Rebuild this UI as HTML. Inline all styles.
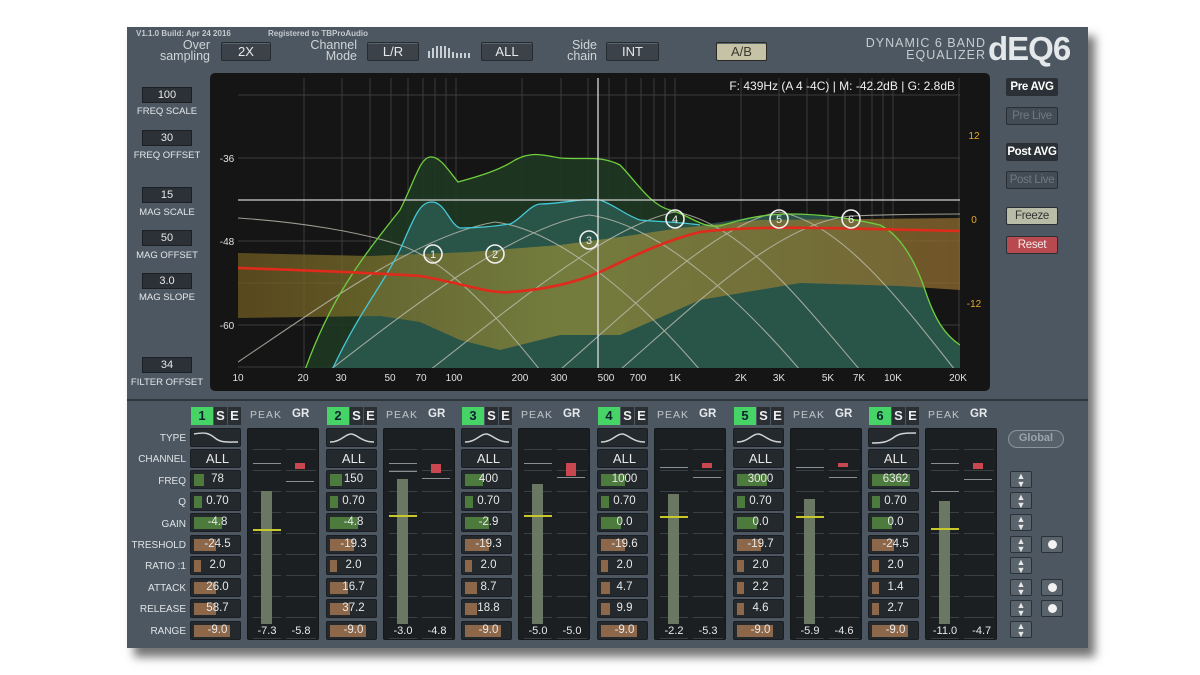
<!DOCTYPE html>
<html><head><meta charset="utf-8"><style>
*{margin:0;padding:0;box-sizing:border-box}
body{width:1200px;height:675px;background:#fff;font-family:"Liberation Sans",sans-serif;position:relative;overflow:hidden}
#p{position:absolute;left:127px;top:27px;width:961px;height:621px;background:#4c5761;box-shadow:7px 9px 9px rgba(0,0,0,.55)}
.a{position:absolute}
.btn{position:absolute;background:#3b4249;border:1px solid #262b30;border-radius:2px;color:#e6e8ea;font-size:13px;text-align:center;box-shadow:inset 0 1px 0 #59636c}
.lbl{position:absolute;color:#cfd4d8;font-size:12.5px;line-height:11px;text-align:right}
.lb{position:absolute;color:#e4e7ea;font-size:9.5px;text-align:center;width:80px;white-space:nowrap}
.lv{position:absolute;width:50px;height:16px;background:#2b3136;border:1px solid #1c2024;color:#e8e8e8;font-size:11px;text-align:center;line-height:14px}
.rb{position:absolute;left:1006px;width:52px;height:18px;border:1px solid #2a2f33;border-radius:2px;font-size:11.5px;text-align:center;line-height:16px;font-weight:bold;white-space:nowrap;letter-spacing:-.3px;overflow:hidden}
.band{position:absolute;top:0;width:135px;height:675px}
.n{position:absolute;top:407px;height:18px;font-size:13px;font-weight:bold;text-align:center;line-height:18px}
.v{position:absolute;left:0;width:51px;height:19px;background:#24292d;border:1px solid #1a1d21;border-radius:2px;color:#e8e8e8;font-size:11.5px;line-height:17px}
.v i{position:absolute;left:3px;top:3px;height:12px;display:block}
.v span{position:relative;display:block;text-align:center;padding-left:4px}
.g{background:#4d7b3e}.b{background:#8c674a}
.m{position:absolute;left:57px;top:428px;width:72px;height:212px;background:#1c1f22;border:1px solid #15181a;border-radius:2px;overflow:hidden}
.m .c{position:absolute;top:0;height:212px;background:repeating-linear-gradient(to bottom,transparent 0 20px,#3a3f44 20px 21px)}
.ud{position:absolute;left:1010px;width:22px;height:17px;background:#5a646d;border:1px solid #2a3035;border-radius:2px;color:#e8e8e8;font-size:9px;text-align:center;line-height:8px}
.dot{position:absolute;left:1041px;width:22px;height:17px;background:#5a646d;border:1px solid #2a3035;border-radius:2px}
.dot:after{content:"";position:absolute;left:6px;top:3px;width:9px;height:9px;border-radius:50%;background:#f2f2f2}
</style></head><body>
<div id="p"></div>
<div class="a" style="left:127px;top:399px;width:961px;height:2px;background:#2e353b"></div>
<!-- header -->
<div class="a" style="left:136px;top:29px;font-size:8px;font-weight:bold;color:#c4c9cd">V1.1.0 Build: Apr 24 2016</div>
<div class="a" style="left:268px;top:29px;font-size:8px;font-weight:bold;color:#c4c9cd">Registered to TBProAudio</div>
<div class="lbl" style="left:140px;top:40px;width:70px">Over<br>sampling</div>
<div class="btn" style="left:221px;top:42px;width:50px;height:19px;line-height:17px">2X</div>
<div class="lbl" style="left:287px;top:40px;width:70px">Channel<br>Mode</div>
<div class="btn" style="left:367px;top:42px;width:52px;height:19px;line-height:17px">L/R</div>
<svg class="a" style="left:427px;top:43px" width="48" height="16"><g fill="#c9ced2"><rect x="1" y="8" width="2" height="7"/><rect x="5" y="5" width="2" height="10"/><rect x="9" y="3" width="2" height="12"/><rect x="13" y="3" width="2" height="12"/><rect x="17" y="3" width="2" height="12"/><rect x="21" y="5" width="2" height="10"/><rect x="25" y="9" width="2" height="6"/><rect x="29" y="10" width="2" height="5"/><rect x="33" y="10" width="2" height="5"/><rect x="37" y="10" width="2" height="5"/><rect x="41" y="10" width="2" height="5"/></g></svg>
<div class="btn" style="left:481px;top:42px;width:52px;height:19px;line-height:17px">ALL</div>
<div class="lbl" style="left:537px;top:40px;width:60px">Side<br>chain</div>
<div class="btn" style="left:606px;top:42px;width:53px;height:19px;line-height:17px">INT</div>
<div class="btn" style="left:716px;top:42px;width:51px;height:19px;line-height:17px;background:#c6c2a6;color:#3a3a30;border-color:#2a2a25">A/B</div>
<div class="a" style="left:840px;top:37px;width:146px;text-align:right;color:#c7ccd0;font-size:12.5px;line-height:12px;letter-spacing:1px">DYNAMIC 6 BAND<br>EQUALIZER</div>
<div class="a" style="left:988px;top:30px;color:#e5e8eb;font-size:33px;font-weight:bold;letter-spacing:-1px">dEQ6</div>
<!-- left controls -->
<div class="lv" style="left:142px;top:87px">100</div><div class="lb" style="left:127px;top:106px">FREQ SCALE</div>
<div class="lv" style="left:142px;top:130px">30</div><div class="lb" style="left:127px;top:150px">FREQ OFFSET</div>
<div class="lv" style="left:142px;top:187px">15</div><div class="lb" style="left:127px;top:207px">MAG SCALE</div>
<div class="lv" style="left:142px;top:230px">50</div><div class="lb" style="left:127px;top:250px">MAG OFFSET</div>
<div class="lv" style="left:142px;top:273px">3.0</div><div class="lb" style="left:127px;top:292px">MAG SLOPE</div>
<div class="lv" style="left:142px;top:357px">34</div><div class="lb" style="left:127px;top:377px">FILTER OFFSET</div>
<!-- right buttons -->
<div class="rb" style="top:78px;background:#2a3035;color:#fff">Pre AVG</div>
<div class="rb" style="top:107px;background:#434c54;color:#6f7a83;font-weight:normal">Pre Live</div>
<div class="rb" style="top:143px;background:#2a3035;color:#fff">Post AVG</div>
<div class="rb" style="top:171px;background:#434c54;color:#6f7a83;font-weight:normal">Post Live</div>
<div class="rb" style="top:207px;background:#b9bca6;color:#333;font-weight:normal">Freeze</div>
<div class="rb" style="top:236px;background:#b84a4f;color:#f4e8e8;font-weight:normal">Reset</div>
<!-- graph -->
<svg class="a" style="left:0;top:0" width="1200" height="400">
<defs>
<clipPath id="cp"><rect x="238" y="78" width="722" height="290"/></clipPath>
<linearGradient id="yg" x1="0" x2="1"><stop offset="0" stop-color="#6e5a20"/><stop offset=".45" stop-color="#8c8a3a"/><stop offset="1" stop-color="#8f6a2e"/></linearGradient>
</defs>
<rect x="210" y="73" width="780" height="318" rx="5" fill="#151515"/>
<g stroke="#3b3b3b" stroke-width="1">
<path d="M238 95H960M238 158H960M238 241H960M238 283H960M238 325H960M238 367H960"/>
<path d="M304 78V368M342 78V368M370 78V368M391 78V368M408 78V368M423 78V368M435 78V368M446 78V368M456 78V368M522 78V368M561 78V368M588 78V368M609 78V368M626 78V368M641 78V368M654 78V368M665 78V368M675 78V368M741 78V368M779 78V368M807 78V368M828 78V368M845 78V368M860 78V368M872 78V368M883 78V368M893 78V368M959 78V368"/>
</g>
<g clip-path="url(#cp)">
<path d="M305 370 C330 300 360 260 400 210 C415 180 420 158 430 157 C440 156 448 170 458 182 C480 176 500 170 515 160 C530 152 540 154 560 158 C585 160 600 155 620 165 C635 180 650 205 670 210 C690 215 700 228 720 226 C740 220 760 214 790 214 C820 214 850 218 880 225 C900 235 915 260 925 290 C935 320 945 335 960 345 L960 370Z" fill="#1f3a23" fill-opacity=".85"/>
<path d="M332 370 C360 310 380 290 400 250 C415 215 420 202 432 202 C445 202 450 225 460 228 C480 228 495 226 510 224 C520 220 530 205 540 204 C560 204 580 198 600 200 C615 205 625 215 640 220 C660 222 680 222 700 225 C740 220 760 214 790 214 C820 214 850 218 880 225 C900 235 915 260 925 290 C935 320 945 335 960 345 L960 370Z" fill="#2d5f56" fill-opacity=".75"/>
<path d="M238 253 L370 256 L470 252 L560 245 L620 237 L680 228 L760 220 L960 218 L960 290 L900 286 L800 283 L700 300 L620 335 L560 335 L500 350 L460 340 L420 322 L380 316 L238 318Z" fill="url(#yg)" fill-opacity=".75"/>
<g fill="none" stroke="#bdbdb0" stroke-width="1.1" opacity=".8">
<path d="M238 218 C300 222 360 232 400 245 C450 262 500 320 540 370"/>
<path d="M238 362 C330 300 420 235 495 222 C560 230 640 300 700 370"/>
<path d="M330 370 C420 300 520 225 589 215 C660 225 740 300 800 370"/>
<path d="M430 370 C520 300 610 225 675 212 C740 222 800 300 860 370"/>
<path d="M560 370 C640 300 720 222 779 212 C840 222 900 300 955 370"/>
<path d="M620 370 C700 300 780 222 851 216 C900 214 930 214 960 214"/>
</g>
<path d="M305 370 C330 300 360 260 400 210 C415 180 420 158 430 157 C440 156 448 170 458 182 C480 176 500 170 515 160 C530 152 540 154 560 158 C585 160 600 155 620 165 C635 180 650 205 670 210 C690 215 700 228 720 226 C740 220 760 214 790 214 C820 214 850 218 880 225 C900 235 915 260 925 290 C935 320 945 335 960 345" fill="none" stroke="#6fcf3d" stroke-width="1.3"/>
<path d="M332 370 C360 310 380 290 400 250 C415 215 420 202 432 202 C445 202 450 225 460 228 C480 228 495 226 510 224 C520 220 530 205 540 204 C560 204 580 198 600 200 C615 205 625 215 640 220 C660 222 680 222 700 225" fill="none" stroke="#45c8d8" stroke-width="1.3"/>
<path d="M238 200H960" stroke="#d0d0d0" stroke-width="1.3"/>
<path d="M238 268 C300 270 360 272 420 276 C470 285 490 294 510 292 C540 290 570 285 600 272 C630 258 660 242 700 232 C760 225 820 228 960 231" fill="none" stroke="#e02a1c" stroke-width="2.6"/>
<path d="M598 78V368" stroke="#e8e8e8" stroke-width="1.2"/>
</g>
<g fill="none" stroke="#f0f0f0" stroke-width="1.6"><circle cx="433" cy="254" r="9"/><circle cx="495" cy="254" r="9"/><circle cx="589" cy="240" r="9"/><circle cx="675" cy="219" r="9"/><circle cx="779" cy="219" r="9"/><circle cx="851" cy="219" r="9"/></g>
<g fill="#f0f0f0" font-size="11" text-anchor="middle" font-family="Liberation Sans"><text x="433" y="258">1</text><text x="495" y="258">2</text><text x="589" y="244">3</text><text x="675" y="223">4</text><text x="779" y="223">5</text><text x="851" y="223">6</text></g>
<g fill="#e0e0e0" font-size="10" font-family="Liberation Sans" text-anchor="middle">
<text x="238" y="381">10</text><text x="303" y="381">20</text><text x="341" y="381">30</text><text x="390" y="381">50</text><text x="421" y="381">70</text><text x="454" y="381">100</text><text x="520" y="381">200</text><text x="559" y="381">300</text><text x="606" y="381">500</text><text x="638" y="381">700</text><text x="675" y="381">1K</text><text x="741" y="381">2K</text><text x="779" y="381">3K</text><text x="828" y="381">5K</text><text x="859" y="381">7K</text><text x="893" y="381">10K</text><text x="958" y="381">20K</text>
<text x="227" y="162">-36</text><text x="227" y="245">-48</text><text x="227" y="329">-60</text>
</g>
<g fill="#e6a82a" font-size="10" font-family="Liberation Sans" text-anchor="middle"><text x="974" y="139">12</text><text x="974" y="223">0</text><text x="974" y="307">-12</text></g>
<text x="955" y="90" fill="#f0f0f0" font-size="12" text-anchor="end" font-family="Liberation Sans">F: 439Hz (A 4 -4C) | M: -42.2dB | G: 2.8dB</text>
</svg>
<!-- row labels -->
<div class="a" style="left:100px;top:428px;width:86px;text-align:right;color:#dfe3e6;font-size:10px;line-height:21.4px">TYPE<br>CHANNEL<br>FREQ<br>Q<br>GAIN<br>TRESHOLD<br>RATIO :1<br>ATTACK<br>RELEASE<br>RANGE</div>

<!-- BAND 1 -->
<div class="band" style="left:190px">
<div class="n" style="left:1px;width:22px;background:#46d466;color:#123">1</div><div class="n" style="left:24px;width:13px;background:#2a2f33;color:#eee">S</div><div class="n" style="left:38px;width:13px;background:#2a2f33;color:#eee">E</div>
<div class="a" style="left:60px;top:409px;font-size:10.5px;color:#c0c6ca;letter-spacing:1px">PEAK</div><div class="a" style="left:102px;top:408px;font-size:11.5px;font-weight:bold;color:#e8ebed">GR</div>
<div class="v" style="top:428px"><svg width="49" height="17"><path d="M3 5 C14 3 18 4 24 9 C30 14 36 13 47 13" fill="none" stroke="#cfd3d6" stroke-width="1.5"/></svg></div>
<div class="v" style="top:449px;font-size:13px"><span>ALL</span></div>
<div class="v" style="top:470px"><i class="g" style="width:10px"></i><span>78</span></div>
<div class="v" style="top:492px"><i class="g" style="width:8px"></i><span>0.70</span></div>
<div class="v" style="top:513px"><i class="g" style="width:28px"></i><span>-4.8</span></div>
<div class="v" style="top:535px"><i class="b" style="width:22px"></i><span>-24.5</span></div>
<div class="v" style="top:556px"><i class="b" style="width:7px"></i><span>2.0</span></div>
<div class="v" style="top:578px"><i class="b" style="width:22px"></i><span>26.0</span></div>
<div class="v" style="top:599px"><i class="b" style="width:22px"></i><span>58.7</span></div>
<div class="v" style="top:621px"><i class="b" style="width:36px"></i><span>-9.0</span></div>
<div class="m"><div class="c" style="left:5px;width:28px"></div><div class="c" style="left:38px;width:30px"></div>
<div class="a" style="left:13px;top:62px;width:11px;height:133px;background:#6a7763"></div>
<div class="a" style="left:5px;top:34px;width:28px;height:1px;background:#8a8f93"></div>
<div class="a" style="left:5px;top:100px;width:28px;height:2px;background:#c9c82a"></div>
<div class="a" style="left:47px;top:34px;width:10px;height:6px;background:#c9474e"></div>
<div class="a" style="left:38px;top:52px;width:28px;height:1px;background:#8a8f93"></div>
<div class="a" style="left:0;top:196px;width:72px;font-size:11px;color:#e8e8e8;word-spacing:12px;text-align:center">-7.3 -5.8</div></div>
</div>

<!-- BAND 2 -->
<div class="band" style="left:326px">
<div class="n" style="left:1px;width:22px;background:#46d466;color:#123">2</div><div class="n" style="left:24px;width:13px;background:#2a2f33;color:#eee">S</div><div class="n" style="left:38px;width:13px;background:#2a2f33;color:#eee">E</div>
<div class="a" style="left:60px;top:409px;font-size:10.5px;color:#c0c6ca;letter-spacing:1px">PEAK</div><div class="a" style="left:102px;top:408px;font-size:11.5px;font-weight:bold;color:#e8ebed">GR</div>
<div class="v" style="top:428px"><svg width="49" height="17"><path d="M3 13 C14 13 18 5 24 5 C30 5 34 13 47 13" fill="none" stroke="#cfd3d6" stroke-width="1.5"/></svg></div>
<div class="v" style="top:449px;font-size:13px"><span>ALL</span></div>
<div class="v" style="top:470px"><i class="g" style="width:12px"></i><span>150</span></div>
<div class="v" style="top:492px"><i class="g" style="width:8px"></i><span>0.70</span></div>
<div class="v" style="top:513px"><i class="g" style="width:28px"></i><span>-4.8</span></div>
<div class="v" style="top:535px"><i class="b" style="width:24px"></i><span>-19.3</span></div>
<div class="v" style="top:556px"><i class="b" style="width:7px"></i><span>2.0</span></div>
<div class="v" style="top:578px"><i class="b" style="width:18px"></i><span>16.7</span></div>
<div class="v" style="top:599px"><i class="b" style="width:20px"></i><span>37.2</span></div>
<div class="v" style="top:621px"><i class="b" style="width:36px"></i><span>-9.0</span></div>
<div class="m"><div class="c" style="left:5px;width:28px"></div><div class="c" style="left:38px;width:30px"></div>
<div class="a" style="left:13px;top:50px;width:11px;height:145px;background:#6a7763"></div>
<div class="a" style="left:5px;top:34px;width:28px;height:1px;background:#8a8f93"></div>
<div class="a" style="left:5px;top:42px;width:28px;height:1px;background:#8a8f93"></div>
<div class="a" style="left:5px;top:86px;width:28px;height:2px;background:#c9c82a"></div>
<div class="a" style="left:47px;top:35px;width:10px;height:9px;background:#c9474e"></div>
<div class="a" style="left:38px;top:49px;width:28px;height:1px;background:#8a8f93"></div>
<div class="a" style="left:0;top:196px;width:72px;font-size:11px;color:#e8e8e8;word-spacing:12px;text-align:center">-3.0 -4.8</div></div>
</div>

<!-- BAND 3 -->
<div class="band" style="left:461px">
<div class="n" style="left:1px;width:22px;background:#46d466;color:#123">3</div><div class="n" style="left:24px;width:13px;background:#2a2f33;color:#eee">S</div><div class="n" style="left:38px;width:13px;background:#2a2f33;color:#eee">E</div>
<div class="a" style="left:60px;top:409px;font-size:10.5px;color:#c0c6ca;letter-spacing:1px">PEAK</div><div class="a" style="left:102px;top:408px;font-size:11.5px;font-weight:bold;color:#e8ebed">GR</div>
<div class="v" style="top:428px"><svg width="49" height="17"><path d="M3 13 C14 13 18 5 24 5 C30 5 34 13 47 13" fill="none" stroke="#cfd3d6" stroke-width="1.5"/></svg></div>
<div class="v" style="top:449px;font-size:13px"><span>ALL</span></div>
<div class="v" style="top:470px"><i class="g" style="width:18px"></i><span>400</span></div>
<div class="v" style="top:492px"><i class="g" style="width:8px"></i><span>0.70</span></div>
<div class="v" style="top:513px"><i class="g" style="width:24px"></i><span>-2.9</span></div>
<div class="v" style="top:535px"><i class="b" style="width:24px"></i><span>-19.3</span></div>
<div class="v" style="top:556px"><i class="b" style="width:7px"></i><span>2.0</span></div>
<div class="v" style="top:578px"><i class="b" style="width:12px"></i><span>8.7</span></div>
<div class="v" style="top:599px"><i class="b" style="width:12px"></i><span>18.8</span></div>
<div class="v" style="top:621px"><i class="b" style="width:36px"></i><span>-9.0</span></div>
<div class="m"><div class="c" style="left:5px;width:28px"></div><div class="c" style="left:38px;width:30px"></div>
<div class="a" style="left:13px;top:55px;width:11px;height:140px;background:#6a7763"></div>
<div class="a" style="left:5px;top:34px;width:28px;height:1px;background:#8a8f93"></div>
<div class="a" style="left:5px;top:86px;width:28px;height:2px;background:#c9c82a"></div>
<div class="a" style="left:47px;top:34px;width:10px;height:13px;background:#c9474e"></div>
<div class="a" style="left:38px;top:48px;width:28px;height:1px;background:#8a8f93"></div>
<div class="a" style="left:0;top:196px;width:72px;font-size:11px;color:#e8e8e8;word-spacing:12px;text-align:center">-5.0 -5.0</div></div>
</div>

<!-- BAND 4 -->
<div class="band" style="left:597px">
<div class="n" style="left:1px;width:22px;background:#46d466;color:#123">4</div><div class="n" style="left:24px;width:13px;background:#2a2f33;color:#eee">S</div><div class="n" style="left:38px;width:13px;background:#2a2f33;color:#eee">E</div>
<div class="a" style="left:60px;top:409px;font-size:10.5px;color:#c0c6ca;letter-spacing:1px">PEAK</div><div class="a" style="left:102px;top:408px;font-size:11.5px;font-weight:bold;color:#e8ebed">GR</div>
<div class="v" style="top:428px"><svg width="49" height="17"><path d="M3 13 C14 13 18 5 24 5 C30 5 34 13 47 13" fill="none" stroke="#cfd3d6" stroke-width="1.5"/></svg></div>
<div class="v" style="top:449px;font-size:13px"><span>ALL</span></div>
<div class="v" style="top:470px"><i class="g" style="width:24px"></i><span>1000</span></div>
<div class="v" style="top:492px"><i class="g" style="width:8px"></i><span>0.70</span></div>
<div class="v" style="top:513px"><i class="g" style="width:20px"></i><span>0.0</span></div>
<div class="v" style="top:535px"><i class="b" style="width:24px"></i><span>-19.6</span></div>
<div class="v" style="top:556px"><i class="b" style="width:7px"></i><span>2.0</span></div>
<div class="v" style="top:578px"><i class="b" style="width:9px"></i><span>4.7</span></div>
<div class="v" style="top:599px"><i class="b" style="width:9px"></i><span>9.9</span></div>
<div class="v" style="top:621px"><i class="b" style="width:36px"></i><span>-9.0</span></div>
<div class="m"><div class="c" style="left:5px;width:28px"></div><div class="c" style="left:38px;width:30px"></div>
<div class="a" style="left:13px;top:65px;width:11px;height:130px;background:#6a7763"></div>
<div class="a" style="left:5px;top:38px;width:28px;height:1px;background:#8a8f93"></div>
<div class="a" style="left:5px;top:87px;width:28px;height:2px;background:#c9c82a"></div>
<div class="a" style="left:47px;top:34px;width:10px;height:5px;background:#c9474e"></div>
<div class="a" style="left:38px;top:48px;width:28px;height:1px;background:#8a8f93"></div>
<div class="a" style="left:0;top:196px;width:72px;font-size:11px;color:#e8e8e8;word-spacing:12px;text-align:center">-2.2 -5.3</div></div>
</div>

<!-- BAND 5 -->
<div class="band" style="left:733px">
<div class="n" style="left:1px;width:22px;background:#46d466;color:#123">5</div><div class="n" style="left:24px;width:13px;background:#2a2f33;color:#eee">S</div><div class="n" style="left:38px;width:13px;background:#2a2f33;color:#eee">E</div>
<div class="a" style="left:60px;top:409px;font-size:10.5px;color:#c0c6ca;letter-spacing:1px">PEAK</div><div class="a" style="left:102px;top:408px;font-size:11.5px;font-weight:bold;color:#e8ebed">GR</div>
<div class="v" style="top:428px"><svg width="49" height="17"><path d="M3 13 C14 13 18 5 24 5 C30 5 34 13 47 13" fill="none" stroke="#cfd3d6" stroke-width="1.5"/></svg></div>
<div class="v" style="top:449px;font-size:13px"><span>ALL</span></div>
<div class="v" style="top:470px"><i class="g" style="width:30px"></i><span>3000</span></div>
<div class="v" style="top:492px"><i class="g" style="width:8px"></i><span>0.70</span></div>
<div class="v" style="top:513px"><i class="g" style="width:20px"></i><span>0.0</span></div>
<div class="v" style="top:535px"><i class="b" style="width:24px"></i><span>-19.7</span></div>
<div class="v" style="top:556px"><i class="b" style="width:7px"></i><span>2.0</span></div>
<div class="v" style="top:578px"><i class="b" style="width:7px"></i><span>2.2</span></div>
<div class="v" style="top:599px"><i class="b" style="width:7px"></i><span>4.6</span></div>
<div class="v" style="top:621px"><i class="b" style="width:36px"></i><span>-9.0</span></div>
<div class="m"><div class="c" style="left:5px;width:28px"></div><div class="c" style="left:38px;width:30px"></div>
<div class="a" style="left:13px;top:70px;width:11px;height:125px;background:#6a7763"></div>
<div class="a" style="left:5px;top:38px;width:28px;height:1px;background:#8a8f93"></div>
<div class="a" style="left:5px;top:87px;width:28px;height:2px;background:#c9c82a"></div>
<div class="a" style="left:47px;top:34px;width:10px;height:4px;background:#c9474e"></div>
<div class="a" style="left:38px;top:48px;width:28px;height:1px;background:#8a8f93"></div>
<div class="a" style="left:0;top:196px;width:72px;font-size:11px;color:#e8e8e8;word-spacing:12px;text-align:center">-5.9 -4.6</div></div>
</div>

<!-- BAND 6 -->
<div class="band" style="left:868px">
<div class="n" style="left:1px;width:22px;background:#46d466;color:#123">6</div><div class="n" style="left:24px;width:13px;background:#2a2f33;color:#eee">S</div><div class="n" style="left:38px;width:13px;background:#2a2f33;color:#eee">E</div>
<div class="a" style="left:60px;top:409px;font-size:10.5px;color:#c0c6ca;letter-spacing:1px">PEAK</div><div class="a" style="left:102px;top:408px;font-size:11.5px;font-weight:bold;color:#e8ebed">GR</div>
<div class="v" style="top:428px"><svg width="49" height="17"><path d="M3 14 C14 14 18 13 24 9 C30 4 36 4 47 4" fill="none" stroke="#cfd3d6" stroke-width="1.5"/></svg></div>
<div class="v" style="top:449px;font-size:13px"><span>ALL</span></div>
<div class="v" style="top:470px"><i class="g" style="width:38px"></i><span>6362</span></div>
<div class="v" style="top:492px"><i class="g" style="width:8px"></i><span>0.70</span></div>
<div class="v" style="top:513px"><i class="g" style="width:20px"></i><span>0.0</span></div>
<div class="v" style="top:535px"><i class="b" style="width:22px"></i><span>-24.5</span></div>
<div class="v" style="top:556px"><i class="b" style="width:7px"></i><span>2.0</span></div>
<div class="v" style="top:578px"><i class="b" style="width:7px"></i><span>1.4</span></div>
<div class="v" style="top:599px"><i class="b" style="width:7px"></i><span>2.7</span></div>
<div class="v" style="top:621px"><i class="b" style="width:36px"></i><span>-9.0</span></div>
<div class="m"><div class="c" style="left:5px;width:28px"></div><div class="c" style="left:38px;width:30px"></div>
<div class="a" style="left:13px;top:72px;width:11px;height:123px;background:#6a7763"></div>
<div class="a" style="left:5px;top:34px;width:28px;height:1px;background:#8a8f93"></div>
<div class="a" style="left:5px;top:62px;width:28px;height:1px;background:#8a8f93"></div>
<div class="a" style="left:5px;top:99px;width:28px;height:2px;background:#c9c82a"></div>
<div class="a" style="left:47px;top:34px;width:10px;height:6px;background:#c9474e"></div>
<div class="a" style="left:38px;top:50px;width:28px;height:1px;background:#8a8f93"></div>
<div class="a" style="left:0;top:196px;width:72px;font-size:11px;color:#e8e8e8;word-spacing:12px;text-align:center">-11.0 -4.7</div></div>
</div>

<!-- global / right -->
<div class="a" style="left:1008px;top:430px;width:56px;height:18px;border:1.5px solid #8a949c;border-radius:9px;background:#56616a;color:#9aa4ac;font-size:11px;font-weight:bold;text-align:center;line-height:15px">Global</div>
<div class="ud" style="top:471px">▲<br>▼</div>
<div class="ud" style="top:492px">▲<br>▼</div>
<div class="ud" style="top:514px">▲<br>▼</div>
<div class="ud" style="top:536px">▲<br>▼</div>
<div class="ud" style="top:557px">▲<br>▼</div>
<div class="ud" style="top:579px">▲<br>▼</div>
<div class="ud" style="top:600px">▲<br>▼</div>
<div class="ud" style="top:621px">▲<br>▼</div>
<div class="dot" style="top:536px"></div>
<div class="dot" style="top:579px"></div>
<div class="dot" style="top:600px"></div>
</body></html>
